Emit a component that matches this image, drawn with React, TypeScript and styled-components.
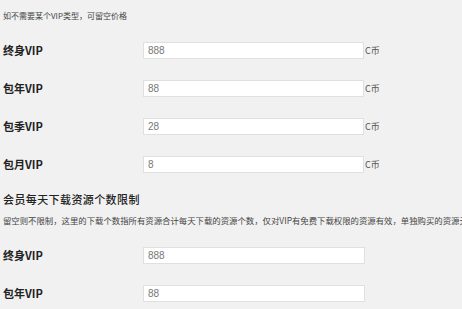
import styled, { createGlobalStyle } from "styled-components"

const Global = createGlobalStyle`
  html, body {
    margin: 0;
    padding: 0;
    background: #f1f1f1;
  }
  body {
    font-family: "Noto Sans CJK SC", "Liberation Sans", sans-serif;
    color: #222;
    overflow: hidden;
  }
`

const Page = styled.div`
  padding: 8px 0 0 3px;
  width: 459px;
  height: 301px;
  overflow: hidden;
`

const Note = styled.p`
  margin: 0;
  font-size: 8px;
  line-height: 16px;
  color: #444;
  white-space: nowrap;
`

const Rows = styled.div<{ $top: number }>`
  margin-top: ${({ $top }) => $top}px;
`

const Row = styled.div`
  display: flex;
  align-items: center;
  height: 38px;
`

const Label = styled.div`
  width: 140px;
  font-size: 11px;
  font-weight: 700;
  color: #222;
`

const Input = styled.input<{ $w: number }>`
  box-sizing: border-box;
  width: ${({ $w }) => $w}px;
  height: 17px;
  margin: 0;
  padding: 0 4px;
  border: 1px solid #e0e0e0;
  background: #fff;
  font-family: "Liberation Sans", sans-serif;
  font-size: 10px;
  color: #777;
  outline: none;
`

const Unit = styled.span`
  margin-left: 1px;
  font-size: 9px;
  color: #555;
`

const Heading = styled.h2`
  margin: 6px 0 0;
  font-size: 11px;
  line-height: 20px;
  font-weight: 500;
  letter-spacing: 0.4px;
  color: #222;
`

const Desc = styled(Note)`
  margin-top: 3px;
  font-size: 8.4px;
`

const PRICES = [
  ["终身VIP", "888"],
  ["包年VIP", "88"],
  ["包季VIP", "28"],
  ["包月VIP", "8"],
]

const LIMITS = [
  ["终身VIP", "888"],
  ["包年VIP", "88"],
]

export default function App() {
  return (
    <>
      <Global />
      <Page>
        <Note>如不需要某个VIP类型，可留空价格</Note>
        <Rows $top={7}>
          {PRICES.map(([label, value]) => (
            <Row key={label}>
              <Label>{label}</Label>
              <Input $w={221} defaultValue={value} />
              <Unit>C币</Unit>
            </Row>
          ))}
        </Rows>
        <Heading>会员每天下载资源个数限制</Heading>
        <Desc>
          留空则不限制，这里的下载个数指所有资源合计每天下载的资源个数，仅对VIP有免费下载权限的资源有效，单独购买的资源无效
        </Desc>
        <Rows $top={8}>
          {LIMITS.map(([label, value]) => (
            <Row key={label}>
              <Label>{label}</Label>
              <Input $w={222} defaultValue={value} />
            </Row>
          ))}
        </Rows>
      </Page>
    </>
  )
}
